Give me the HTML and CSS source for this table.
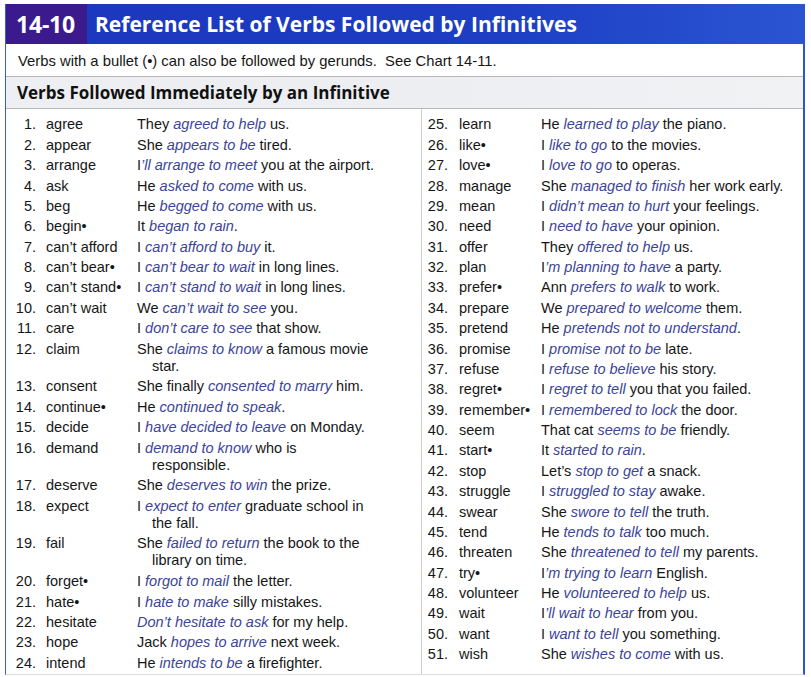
FILE: index.html
```html
<!DOCTYPE html>
<html lang="en">
<head>
<meta charset="utf-8">
<title>14-10 Reference List of Verbs Followed by Infinitives</title>
<link rel="stylesheet" href="styles.css">
</head>
<body>
<div class="chart">
  <header class="chart-head">
    <span class="chart-num">14-10</span>
    <h1 class="chart-title">Reference List of Verbs Followed by Infinitives</h1>
  </header>
  <p class="note">Verbs with a bullet (•) can also be followed by gerunds.&nbsp; See Chart 14-11.</p>
  <h2 class="section">Verbs Followed Immediately by an Infinitive</h2>
  <div class="cols">
    <ol class="col col-left">
      <li class="row"><span class="n">1.</span><span class="v">agree</span><span class="s">They <i>agreed to help</i> us.</span></li>
      <li class="row"><span class="n">2.</span><span class="v">appear</span><span class="s">She <i>appears to be</i> tired.</span></li>
      <li class="row"><span class="n">3.</span><span class="v">arrange</span><span class="s">I<i>’ll arrange to meet</i> you at the airport.</span></li>
      <li class="row"><span class="n">4.</span><span class="v">ask</span><span class="s">He <i>asked to come</i> with us.</span></li>
      <li class="row"><span class="n">5.</span><span class="v">beg</span><span class="s">He <i>begged to come</i> with us.</span></li>
      <li class="row"><span class="n">6.</span><span class="v">begin•</span><span class="s">It <i>began to rain</i>.</span></li>
      <li class="row"><span class="n">7.</span><span class="v">can’t afford</span><span class="s">I <i>can’t afford to buy</i> it.</span></li>
      <li class="row"><span class="n">8.</span><span class="v">can’t bear•</span><span class="s">I <i>can’t bear to wait</i> in long lines.</span></li>
      <li class="row"><span class="n">9.</span><span class="v">can’t stand•</span><span class="s">I <i>can’t stand to wait</i> in long lines.</span></li>
      <li class="row"><span class="n">10.</span><span class="v">can’t wait</span><span class="s">We <i>can’t wait to see</i> you.</span></li>
      <li class="row"><span class="n">11.</span><span class="v">care</span><span class="s">I <i>don’t care to see</i> that show.</span></li>
      <li class="row row-wrap"><span class="n">12.</span><span class="v">claim</span><span class="s">She <i>claims to know</i> a famous movie<br>star.</span></li>
      <li class="row"><span class="n">13.</span><span class="v">consent</span><span class="s">She finally <i>consented to marry</i> him.</span></li>
      <li class="row"><span class="n">14.</span><span class="v">continue•</span><span class="s">He <i>continued to speak</i>.</span></li>
      <li class="row"><span class="n">15.</span><span class="v">decide</span><span class="s">I <i>have decided to leave</i> on Monday.</span></li>
      <li class="row row-wrap"><span class="n">16.</span><span class="v">demand</span><span class="s">I <i>demand to know</i> who is<br>responsible.</span></li>
      <li class="row"><span class="n">17.</span><span class="v">deserve</span><span class="s">She <i>deserves to win</i> the prize.</span></li>
      <li class="row row-wrap"><span class="n">18.</span><span class="v">expect</span><span class="s">I <i>expect to enter</i> graduate school in<br>the fall.</span></li>
      <li class="row row-wrap"><span class="n">19.</span><span class="v">fail</span><span class="s">She <i>failed to return</i> the book to the<br>library on time.</span></li>
      <li class="row"><span class="n">20.</span><span class="v">forget•</span><span class="s">I <i>forgot to mail</i> the letter.</span></li>
      <li class="row"><span class="n">21.</span><span class="v">hate•</span><span class="s">I <i>hate to make</i> silly mistakes.</span></li>
      <li class="row"><span class="n">22.</span><span class="v">hesitate</span><span class="s"><i>Don’t hesitate to ask</i> for my help.</span></li>
      <li class="row"><span class="n">23.</span><span class="v">hope</span><span class="s">Jack <i>hopes to arrive</i> next week.</span></li>
      <li class="row"><span class="n">24.</span><span class="v">intend</span><span class="s">He <i>intends to be</i> a firefighter.</span></li>
    </ol>
    <ol class="col col-right">
      <li class="row"><span class="n">25.</span><span class="v">learn</span><span class="s">He <i>learned to play</i> the piano.</span></li>
      <li class="row"><span class="n">26.</span><span class="v">like•</span><span class="s">I <i>like to go</i> to the movies.</span></li>
      <li class="row"><span class="n">27.</span><span class="v">love•</span><span class="s">I <i>love to go</i> to operas.</span></li>
      <li class="row"><span class="n">28.</span><span class="v">manage</span><span class="s">She <i>managed to finish</i> her work early.</span></li>
      <li class="row"><span class="n">29.</span><span class="v">mean</span><span class="s">I <i>didn’t mean to hurt</i> your feelings.</span></li>
      <li class="row"><span class="n">30.</span><span class="v">need</span><span class="s">I <i>need to have</i> your opinion.</span></li>
      <li class="row"><span class="n">31.</span><span class="v">offer</span><span class="s">They <i>offered to help</i> us.</span></li>
      <li class="row"><span class="n">32.</span><span class="v">plan</span><span class="s">I<i>’m planning to have</i> a party.</span></li>
      <li class="row"><span class="n">33.</span><span class="v">prefer•</span><span class="s">Ann <i>prefers to walk</i> to work.</span></li>
      <li class="row"><span class="n">34.</span><span class="v">prepare</span><span class="s">We <i>prepared to welcome</i> them.</span></li>
      <li class="row"><span class="n">35.</span><span class="v">pretend</span><span class="s">He <i>pretends not to understand</i>.</span></li>
      <li class="row"><span class="n">36.</span><span class="v">promise</span><span class="s">I <i>promise not to be</i> late.</span></li>
      <li class="row"><span class="n">37.</span><span class="v">refuse</span><span class="s">I <i>refuse to believe</i> his story.</span></li>
      <li class="row"><span class="n">38.</span><span class="v">regret•</span><span class="s">I <i>regret to tell</i> you that you failed.</span></li>
      <li class="row"><span class="n">39.</span><span class="v">remember•</span><span class="s">I <i>remembered to lock</i> the door.</span></li>
      <li class="row"><span class="n">40.</span><span class="v">seem</span><span class="s">That cat <i>seems to be</i> friendly.</span></li>
      <li class="row"><span class="n">41.</span><span class="v">start•</span><span class="s">It <i>started to rain</i>.</span></li>
      <li class="row"><span class="n">42.</span><span class="v">stop</span><span class="s">Let’s <i>stop to get</i> a snack.</span></li>
      <li class="row"><span class="n">43.</span><span class="v">struggle</span><span class="s">I <i>struggled to stay</i> awake.</span></li>
      <li class="row"><span class="n">44.</span><span class="v">swear</span><span class="s">She <i>swore to tell</i> the truth.</span></li>
      <li class="row"><span class="n">45.</span><span class="v">tend</span><span class="s">He <i>tends to talk</i> too much.</span></li>
      <li class="row"><span class="n">46.</span><span class="v">threaten</span><span class="s">She <i>threatened to tell</i> my parents.</span></li>
      <li class="row"><span class="n">47.</span><span class="v">try•</span><span class="s">I<i>’m trying to learn</i> English.</span></li>
      <li class="row"><span class="n">48.</span><span class="v">volunteer</span><span class="s">He <i>volunteered to help</i> us.</span></li>
      <li class="row"><span class="n">49.</span><span class="v">wait</span><span class="s">I<i>’ll wait to hear</i> from you.</span></li>
      <li class="row"><span class="n">50.</span><span class="v">want</span><span class="s">I <i>want to tell</i> you something.</span></li>
      <li class="row"><span class="n">51.</span><span class="v">wish</span><span class="s">She <i>wishes to come</i> with us.</span></li>
    </ol>
  </div>
</div>
</body>
</html>
```

FILE: styles.css
```css
* { box-sizing: border-box; }

html, body {
  margin: 0;
  padding: 0;
  background: #ffffff;
}

body {
  font-family: "Liberation Sans", Arial, sans-serif;
  color: #161616;
}

.chart {
  width: 800px;
  margin: 4px 0 0 5px;
  border-left: 1px solid #3b5bd0;
  border-right: 2px solid #2c52d6;
  border-bottom: 1px solid #dcdcdc;
}

.chart-head {
  display: flex;
  align-items: stretch;
  height: 40px;
  background: linear-gradient(90deg, #1b37bd 0%, #1d3dc3 60%, #2a55d2 100%);
}

.chart-num {
  display: flex;
  align-items: center;
  width: 81px;
  padding-left: 10px;
  background: #3a1a8c;
  color: #ffffff;
  font-family: "Open Sans", "Lato", sans-serif;
  font-weight: 700;
  font-size: 23px;
  letter-spacing: -0.2px;
}

.chart-title {
  display: flex;
  align-items: center;
  margin: 0;
  padding-left: 8px;
  color: #ffffff;
  font-family: "Open Sans", "Lato", sans-serif;
  font-weight: 700;
  font-size: 21px;
}

.note {
  margin: 0;
  height: 33px;
  padding: 9px 0 0 12px;
  font-size: 14.8px;
  line-height: 17px;
  border-bottom: 1px solid #b9b9b9;
}

.section {
  margin: 0;
  height: 32px;
  padding: 5px 0 0 11px;
  background: linear-gradient(90deg, #eeeff2 0%, #eceef1 50%, #f1f2f4 100%);
  font-family: "Open Sans", "Lato", sans-serif;
  font-weight: 700;
  font-size: 17px;
  line-height: 22px;
  color: #111111;
  border-bottom: 1px solid #b9b9b9;
}

.cols {
  display: flex;
  align-items: stretch;
}

.col {
  list-style: none;
  margin: 0;
  padding: 5.8px 0 1px 0;
}

.col-left {
  width: 415px;
}

.col-right {
  flex: 1;
  border-left: 1px solid #cfcfcf;
}

.row {
  display: grid;
  padding: 1.7px 0;
  font-size: 14.5px;
  line-height: 17px;
}

.row-wrap {
  padding-bottom: 2.1px;
}

.col-left .row {
  grid-template-columns: 40px 91px 1fr;
}

.col-right .row {
  grid-template-columns: 37px 82px 1fr;
}

.n {
  text-align: right;
  padding-right: 10px;
}

.col-right .n {
  padding-right: 11px;
}

.v {
  white-space: nowrap;
}

.s {
  white-space: nowrap;
  padding-left: 15px;
  text-indent: -15px;
}

.s i {
  color: #3b4499;
}
```
